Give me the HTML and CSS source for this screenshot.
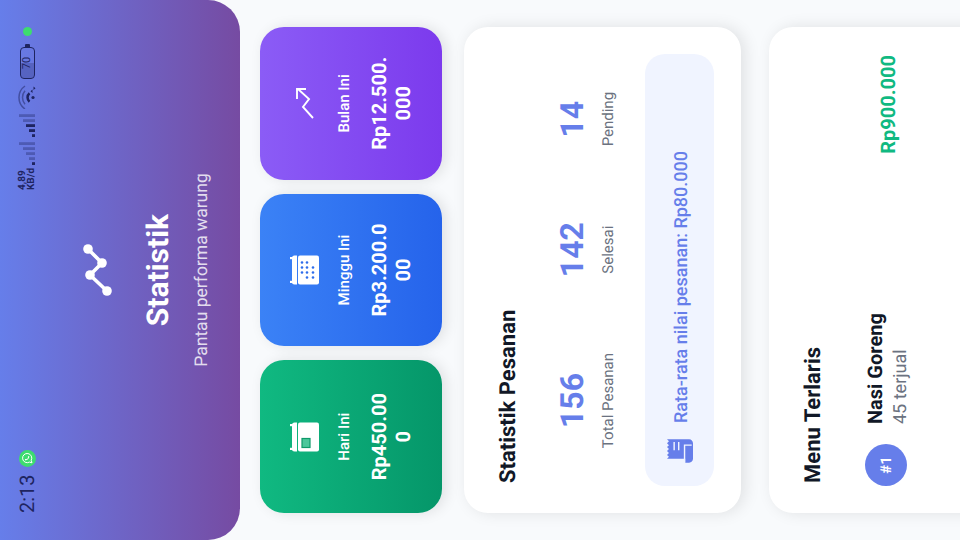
FILE: index.html
```html
<!DOCTYPE html>
<html lang="id">
<head>
<meta charset="utf-8">
<title>Statistik</title>
<link rel="stylesheet" href="styles.css">
</head>
<body>
<div class="stage">
  <header class="hero">
    <div class="status">
      <div class="status-side">
        <span class="time">2:13</span>
        <svg class="wa" viewBox="0 0 17 17"><circle cx="8.5" cy="8.5" r="8.5" fill="#3ddc6f"/><path d="M4.2 13l.7-2.6a4.6 4.6 0 1 1 1.8 1.8z" fill="none" stroke="#fff" stroke-width="1"/><path d="M6.6 6.4c.1 2 1.8 3.7 3.9 4l.6-1.1-1.3-.6-.6.5c-.7-.4-1.1-.9-1.4-1.5l.5-.6-.6-1.3z" fill="#fff"/></svg>
      </div>
      <div class="status-side">
        <span class="speed">4,89<br>KB/d</span>
        <svg class="signal" viewBox="0 0 23 16"><g fill="#1e2460"><rect x="0" y="13" width="2.8" height="3"/><g opacity=".35"><rect x="5" y="10" width="2.8" height="6"/><rect x="10" y="7" width="2.8" height="9"/><rect x="15" y="4" width="2.8" height="12"/><rect x="20" y="0" width="2.8" height="16"/></g></g></svg>
        <svg class="signal" viewBox="0 0 23 16"><g fill="#1e2460"><rect x="0" y="13" width="2.8" height="3"/><rect x="5" y="10" width="2.8" height="6"/><rect x="10" y="7" width="2.8" height="9"/><g opacity=".35"><rect x="15" y="4" width="2.8" height="12"/><rect x="20" y="0" width="2.8" height="16"/></g></g></svg>
        <svg class="wifi" viewBox="0 0 24 18"><g fill="none" stroke="#1e2460"><g opacity=".5" stroke-width="1.5"><path d="M0 7A14 14 0 0 1 23 7"/><path d="M4.7 7A10.5 10.5 0 0 1 18.3 7"/></g><path d="M7.3 11.5A5.5 5.5 0 0 1 15.7 11.5" stroke-width="2.5"/></g><circle cx="11.5" cy="15" r="1.6" fill="#1e2460"/><path d="M16 14.5l1.7-2 1.7 2zM19 15.5l1.7 2 1.7-2z" fill="#1e2460"/></svg>
        <div class="battery"><div class="battery-body"><div class="battery-fill"></div><span class="battery-text">70</span></div><div class="battery-nub"></div></div>
        <span class="dot"></span>
      </div>
    </div>
    <svg class="hero-icon" viewBox="0 0 56 56"><polyline points="7,38 23,21 35,33 49,19" fill="none" stroke="#fff" stroke-width="3.6"/><g fill="#fff"><circle cx="7" cy="38" r="4.8"/><circle cx="23" cy="21" r="4.8"/><circle cx="35" cy="33" r="4.8"/><circle cx="49" cy="19" r="4.8"/></g></svg>
    <h1 class="hero-title">Statistik</h1>
    <p class="hero-sub">Pantau performa warung</p>
  </header>

  <main class="content">
    <section class="summary">
      <article class="tile tile-green">
        <svg class="tile-icon" viewBox="0 0 32 32"><g fill="#fff"><rect x="3" y="1" width="2.2" height="4"/><rect x="26.8" y="1" width="2.2" height="4"/><path d="M1.5 8V5.5a2.5 2.5 0 0 1 2.5-2.5h24a2.5 2.5 0 0 1 2.5 2.5V8z"/><rect x="1.5" y="9" width="29" height="21" rx="2"/></g><rect x="5.5" y="13" width="9" height="8" fill="#4cc79b" stroke="#0f9a6a" stroke-width="1.2"/></svg>
        <span class="tile-label">Hari Ini</span>
        <span class="tile-value">Rp450.000</span>
      </article>
      <article class="tile tile-blue">
        <svg class="tile-icon" viewBox="0 0 32 32"><g fill="#fff"><rect x="3" y="1" width="2.2" height="4"/><rect x="26.8" y="1" width="2.2" height="4"/><path d="M1.5 8V5.5a2.5 2.5 0 0 1 2.5-2.5h24a2.5 2.5 0 0 1 2.5 2.5V8z"/><rect x="1.5" y="9" width="29" height="21" rx="2"/></g><g fill="#2f6deb"><circle cx="23.5" cy="13" r="1.3"/><circle cx="18.5" cy="13" r="1.3"/><circle cx="13.5" cy="13" r="1.3"/><circle cx="23.5" cy="18" r="1.3"/><circle cx="18.5" cy="18" r="1.3"/><circle cx="13.5" cy="18" r="1.3"/><circle cx="8.5" cy="18" r="1.3"/><circle cx="18.5" cy="24" r="1.3"/><circle cx="13.5" cy="24" r="1.3"/><circle cx="8.5" cy="24" r="1.3"/></g></svg>
        <span class="tile-label">Minggu Ini</span>
        <span class="tile-value">Rp3.200.000</span>
      </article>
      <article class="tile tile-purple">
        <svg class="tile-icon" viewBox="0 0 32 32"><path d="M1 24L12 14l8 6L30 9M20 8h10v9" fill="none" stroke="#fff" stroke-width="1.9"/></svg>
        <span class="tile-label">Bulan Ini</span>
        <span class="tile-value">Rp12.500.000</span>
      </article>
    </section>

    <section class="card card-orders">
      <h2 class="card-title">Statistik Pesanan</h2>
      <div class="stats">
        <div class="stat"><span class="stat-num">156</span><span class="stat-label">Total Pesanan</span></div>
        <div class="stat"><span class="stat-num">142</span><span class="stat-label">Selesai</span></div>
        <div class="stat"><span class="stat-num">14</span><span class="stat-label">Pending</span></div>
      </div>
      <div class="note">
        <svg class="note-icon" viewBox="2 2 20 20"><path d="M19.5 3.5 18 2l-1.5 1.5L15 2l-1.5 1.5L12 2l-1.5 1.5L9 2 7.5 3.5 6 2v14H3v3c0 1.66 1.34 3 3 3h12c1.66 0 3-1.34 3-3V2z" fill="#667eea"/><path d="M3 15.5H16.5V21M12.5 7.5H19M12.5 11H19" fill="none" stroke="#f0f4ff" stroke-width="1.1"/></svg>
        <span class="note-text">Rata-rata nilai pesanan: Rp80.000</span>
      </div>
    </section>

    <section class="card card-menu">
      <h2 class="card-title card-title-menu">Menu Terlaris</h2>
      <div class="menu-row">
        <span class="rank">#1</span>
        <div class="menu-info"><span class="menu-name">Nasi Goreng</span><span class="menu-sold">45 terjual</span></div>
        <span class="menu-price">Rp900.000</span>
      </div>
    </section>
  </main>
</div>
</body>
</html>
```
FILE: styles.css
```css
* { box-sizing: border-box; margin: 0; padding: 0; }
html, body { width: 960px; height: 540px; overflow: hidden; background: #f8fafc; }
body { font-family: Roboto, "Liberation Sans", sans-serif; text-rendering: geometricPrecision; }

/* The whole app is a portrait screen turned on its side */
.stage {
  width: 540px;
  height: 960px;
  overflow: hidden;
  background: #f8fafc;
  transform-origin: 0 0;
  transform: translateY(540px) rotate(-90deg);
}

.hero {
  height: 240px;
  display: flex;
  flex-direction: column;
  align-items: center;
  color: #fff;
  background: linear-gradient(to bottom, #667eea, #764ba2);
  border-radius: 0 0 32px 32px;
}
.status {
  width: 100%;
  height: 54px;
  padding: 0 27px;
  display: flex;
  justify-content: space-between;
  align-items: center;
  color: #1e2460;
}
.status-side { display: flex; align-items: center; }
.time { font-size: 20px; width: 38px; margin-right: 8px; }
.wa { width: 17px; height: 17px; }
.speed { width: 21px; margin-right: 4px; font-size: 10px; line-height: 9px; font-weight: 700; }
.signal { width: 23px; height: 16px; margin-right: 5px; }
.wifi { width: 24px; height: 18px; margin-right: 6px; }
.battery { display: flex; align-items: center; margin-right: 8px; }
.battery-body {
  position: relative;
  width: 32px;
  height: 15px;
  border: 1.5px solid #1e2460;
  border-radius: 4px;
  overflow: hidden;
  display: flex;
  align-items: center;
  justify-content: center;
}
.battery-fill { position: absolute; left: 0; top: 0; bottom: 0; width: 50%; background: rgba(30, 36, 96, .25); }
.battery-text { position: relative; font-size: 11px; line-height: 12px; }
.battery-nub { width: 3px; height: 5px; background: #1e2460; border-radius: 0 1px 1px 0; }
.dot { width: 9px; height: 9px; border-radius: 50%; background: #3ddc6f; }

.hero-icon { width: 56px; height: 56px; margin-top: 15px; }
.hero-title { margin-top: 16px; font-size: 30px; line-height: 36px; font-weight: 700; }
.hero-sub { margin-top: 14px; font-size: 17.5px; line-height: 22px; opacity: .8; }

.content { padding: 20px 27px 0; display: flex; flex-direction: column; }

.summary { display: flex; gap: 14px; }
.tile {
  flex: 1 1 0;
  min-width: 0;
  height: 182px;
  padding: 29px 29px 0;
  display: flex;
  flex-direction: column;
  align-items: center;
  color: #fff;
  border-radius: 24px;
  box-shadow: 0 4px 14px rgba(0, 0, 0, .1);
}
.tile-green { background: linear-gradient(to bottom, #10b981, #059669); }
.tile-blue { background: linear-gradient(to bottom, #3b82f6, #2563eb); }
.tile-purple { background: linear-gradient(to bottom, #8b5cf6, #7c3aed); }
.tile-icon { width: 32px; height: 32px; flex: none; overflow: visible; }
.tile-label { margin-top: 14px; font-size: 15px; line-height: 18px; font-weight: 500; white-space: nowrap; }
.tile-value {
  width: 100%;
  margin-top: 14px;
  font-size: 20px;
  line-height: 24px;
  font-weight: 700;
  text-align: center;
  word-break: break-all;
}

.card {
  padding: 27px;
  background: #fff;
  border-radius: 24px;
  box-shadow: 0 4px 16px rgba(0, 0, 0, .1);
}
.card-orders { margin-top: 22px; height: 277px; }
.card-menu { margin-top: 28px; padding-bottom: 120px; }
.card-title { padding-left: 3px; margin-top: 5px; font-size: 22px; line-height: 26px; font-weight: 700; color: #111827; }
.card-title-menu { margin-top: 5px; }

.stats { margin-top: 30px; display: flex; justify-content: space-around; }
.stat { display: flex; flex-direction: column; align-items: center; }
.stat-num { font-size: 32px; line-height: 40px; font-weight: 700; color: #667eea; }
.stat-label { margin-top: 7px; font-size: 15px; line-height: 18px; color: #6b7280; }

.note {
  margin-top: 28px;
  height: 69px;
  padding: 0 22px;
  display: flex;
  align-items: center;
  gap: 15px;
  background: #f0f4ff;
  border-radius: 20px;
}
.note-icon { width: 26px; height: 26px; flex: none; }
.note-text { padding-top: 3px; font-size: 18px; font-weight: 500; color: #667eea; }

.menu-row { margin-top: 36px; display: flex; align-items: center; }
.rank {
  width: 42px;
  height: 42px;
  flex: none;
  align-self: flex-start;
  margin-top: 2px;
  display: flex;
  align-items: center;
  justify-content: center;
  font-size: 15px;
  font-weight: 700;
  color: #fff;
  background: #667eea;
  border-radius: 50%;
}
.menu-info { margin-left: 20px; flex: 1; display: flex; flex-direction: column; gap: 3px; }
.menu-name { font-size: 20px; line-height: 24px; font-weight: 700; color: #111827; }
.menu-sold { font-size: 18px; line-height: 22px; color: #6b7280; }
.menu-price { padding-right: 1px; font-size: 20px; font-weight: 700; color: #10b981; }
```
